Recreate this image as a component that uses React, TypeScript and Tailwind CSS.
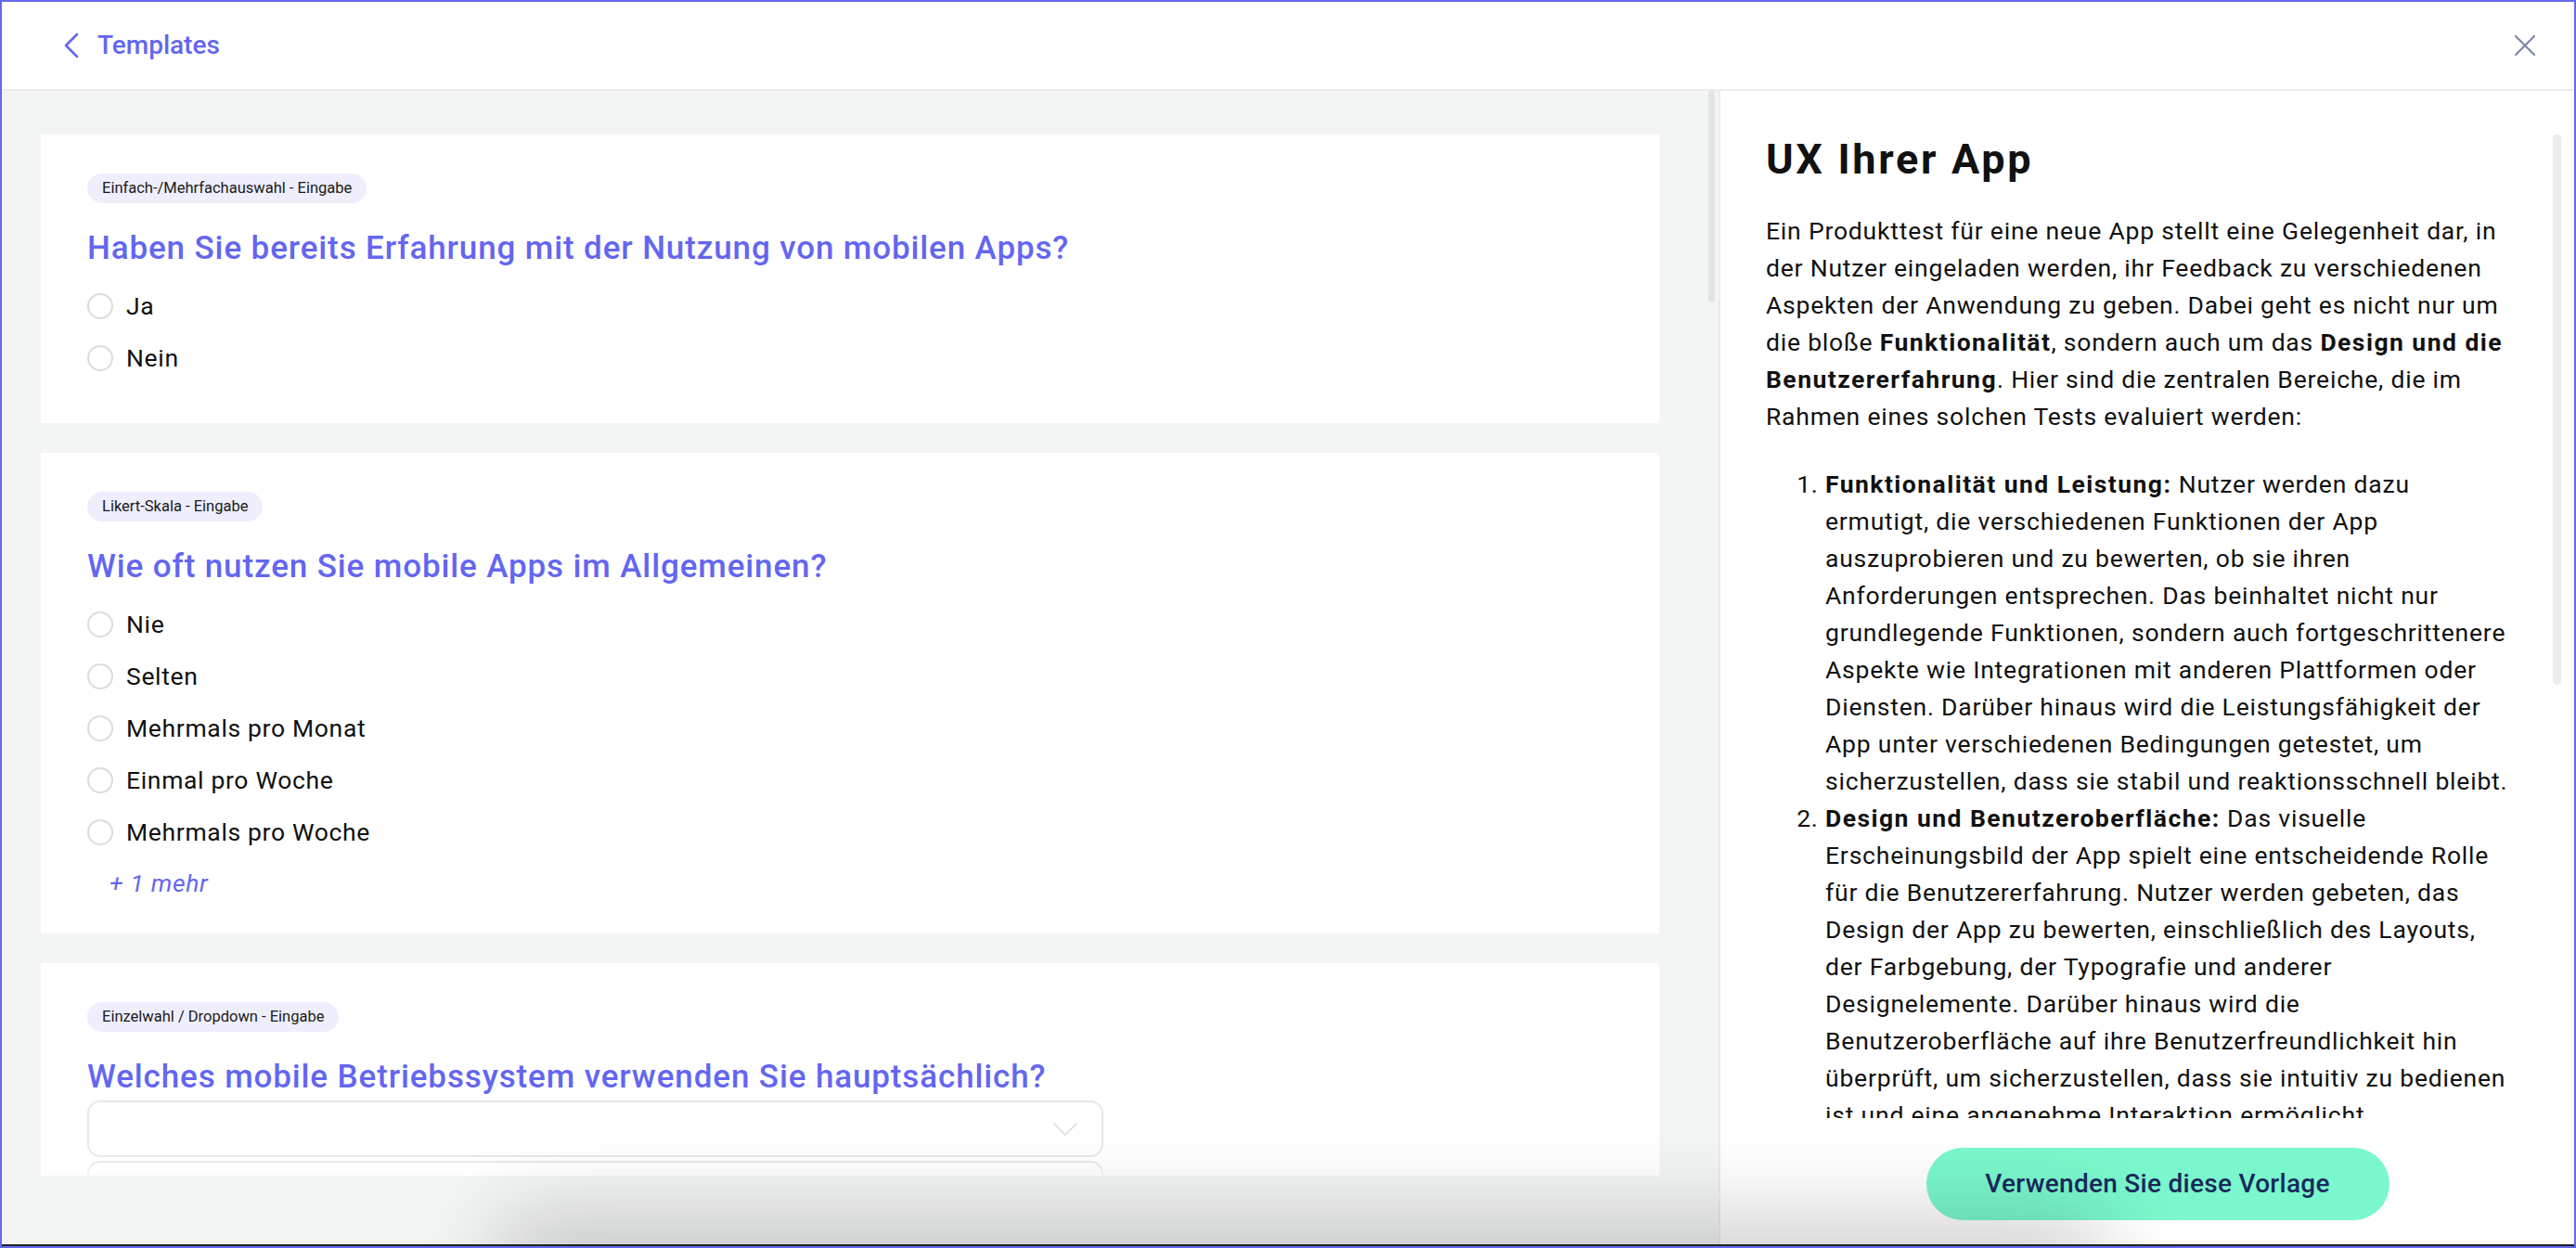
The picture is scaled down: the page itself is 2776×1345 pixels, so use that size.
import { ReactNode } from 'react';

type Question = {
  id: number;
  kind: string;
  title: string;
  type: 'radio' | 'select';
  options?: string[];
  more?: number;
  pad: string;
};

const questions: Question[] = [
  {
    id: 1,
    kind: 'Einfach-/Mehrfachauswahl - Eingabe',
    title: 'Haben Sie bereits Erfahrung mit der Nutzung von mobilen Apps?',
    type: 'radio',
    options: ['Ja', 'Nein'],
    pad: 'pb-[50px]',
  },
  {
    id: 2,
    kind: 'Likert-Skala - Eingabe',
    title: 'Wie oft nutzen Sie mobile Apps im Allgemeinen?',
    type: 'radio',
    options: ['Nie', 'Selten', 'Mehrmals pro Monat', 'Einmal pro Woche', 'Mehrmals pro Woche'],
    more: 1,
    pad: 'pb-[39px]',
  },
  {
    id: 3,
    kind: 'Einzelwahl / Dropdown - Eingabe',
    title: 'Welches mobile Betriebssystem verwenden Sie hauptsächlich?',
    type: 'select',
    pad: 'pb-[50px]',
  },
];

function ChevronDown() {
  return (
    <svg width="26" height="14" viewBox="0 0 26 14" fill="none">
      <polyline points="1,1 13,13 25,1" stroke="#e4e4e4" strokeWidth="2" strokeLinecap="round" strokeLinejoin="round" />
    </svg>
  );
}

function QuestionCard({ q }: { q: Question }) {
  return (
    <div className={`bg-white pl-[50px] pr-[50px] pt-[42px] ${q.pad}`}>
      <span className="inline-flex h-[32px] items-center rounded-full bg-[#efeefc] px-[16px] text-[16.5px] text-[#1a1a1a]">
        {q.kind}
      </span>
      <h3 className="mt-[27px] text-[35px] leading-[44px] font-medium tracking-[0.025em] text-[#6366f1]">{q.title}</h3>

      {q.type === 'radio' && (
        <div className="mt-[20px] flex flex-col gap-[16px]">
          {q.options!.map((opt) => (
            <label key={opt} className="flex h-[40px] items-center gap-[14px]">
              <span className="h-[28px] w-[28px] rounded-full border-2 border-[#dcdcdc]" />
              <span className="text-[26.5px] tracking-[0.025em] text-[#111]">{opt}</span>
            </label>
          ))}
        </div>
      )}

      {q.more && (
        <div className="mt-[20px] pl-[24px] text-[26.5px] leading-[30px] italic tracking-[0.025em] text-[#6366f1]">
          + {q.more} mehr
        </div>
      )}

      {q.type === 'select' && (
        <div className="mt-[3px] flex flex-col gap-[4px]">
          <div className="flex h-[61px] w-[1095px] items-center justify-end rounded-[14px] border-2 border-[#e8e8e8] pr-[26px]">
            <ChevronDown />
          </div>
          <div className="h-[61px] w-[1095px] rounded-[14px] border-2 border-[#e8e8e8]" />
        </div>
      )}
    </div>
  );
}

function B({ children }: { children: ReactNode }) {
  return <strong className="font-bold tracking-[0.055em]">{children}</strong>;
}

export default function App() {
  return (
    <div className="h-[1345px] w-full overflow-hidden border-2 border-[#6468f1] bg-white font-['Roboto',sans-serif]">
      <div className="flex h-full flex-col border-b-2 border-[#222]">
        {/* Header */}
        <header className="flex h-[96px] shrink-0 items-center justify-between border-b-2 border-[#ececec] pl-[65px] pr-[42px]">
          <button className="flex items-center gap-[18px] text-[#6366f1]">
            <svg width="20" height="28" viewBox="0 0 20 28" fill="none">
              <polyline points="16,2 4,14 16,26" stroke="#6366f1" strokeWidth="2.6" strokeLinecap="round" strokeLinejoin="round" />
            </svg>
            <span className="text-[28px] font-medium">Templates</span>
          </button>
          <button aria-label="Schließen">
            <svg width="22" height="22" viewBox="0 0 22 22" fill="none">
              <path d="M1 1 21 21M21 1 1 21" stroke="#7c87a6" strokeWidth="2.2" strokeLinecap="round" />
            </svg>
          </button>
        </header>

        <main className="relative flex min-h-0 flex-1 overflow-hidden">
          {/* Question preview */}
          <section className="relative w-[1850px] shrink-0 bg-[#f3f5f4] pl-[42px] pr-[64px] pt-[47px]">
            <div className="relative h-[1122px] overflow-hidden">
              <div className="flex flex-col gap-[32px]">
                {questions.map((q) => (
                  <QuestionCard key={q.id} q={q} />
                ))}
              </div>
              <div className="pointer-events-none absolute bottom-0 left-0 right-0 h-[15px] bg-linear-to-b from-white/0 to-white/60" />
            </div>
            <div className="absolute left-[1839px] top-0 h-[228px] w-[7px] rounded-full bg-[#e2e4e4]" />
          </section>

          {/* Template description */}
          <aside className="relative flex flex-1 flex-col border-l-2 border-[#ececec]">
            <div className="h-[1107px] shrink-0 overflow-hidden pl-[49px] pt-[47px]">
              <div className="w-[812px] text-[26.5px] leading-[40px] tracking-[0.03em] text-[#111]">
                <h2 className="text-[45px] leading-[53px] font-bold tracking-[0.06em]">UX Ihrer App</h2>
                <p className="mt-[31px]">
                  Ein Produkttest für eine neue App stellt eine Gelegenheit dar, in der Nutzer eingeladen werden, ihr
                  Feedback zu verschiedenen Aspekten der Anwendung zu geben. Dabei geht es nicht nur um die bloße{' '}
                  <B>Funktionalität</B>, sondern auch um das <B>Design und die Benutzererfahrung</B>. Hier sind die
                  zentralen Bereiche, die im Rahmen eines solchen Tests evaluiert werden:
                </p>
                <ol className="mt-[33px] list-decimal pl-[64px]">
                  <li>
                    <B>Funktionalität und Leistung:</B> Nutzer werden dazu ermutigt, die verschiedenen Funktionen der
                    App auszuprobieren und zu bewerten, ob sie ihren Anforderungen entsprechen. Das beinhaltet nicht nur
                    grundlegende Funktionen, sondern auch fortgeschrittenere Aspekte wie Integrationen mit anderen
                    Plattformen oder Diensten. Darüber hinaus wird die Leistungsfähigkeit der App unter verschiedenen
                    Bedingungen getestet, um sicherzustellen, dass sie stabil und reaktionsschnell bleibt.
                  </li>
                  <li>
                    <B>Design und Benutzeroberfläche:</B> Das visuelle Erscheinungsbild der App spielt eine
                    entscheidende Rolle für die Benutzererfahrung. Nutzer werden gebeten, das Design der App zu
                    bewerten, einschließlich des Layouts, der Farbgebung, der Typografie und anderer Designelemente.
                    Darüber hinaus wird die Benutzeroberfläche auf ihre Benutzerfreundlichkeit hin überprüft, um
                    sicherzustellen, dass sie intuitiv zu bedienen ist und eine angenehme Interaktion ermöglicht.
                  </li>
                  <li>
                    <B>Benutzerfreundlichkeit:</B> Nutzer bewerten, wie leicht sich die App erlernen und im Alltag
                    bedienen lässt und ob wichtige Funktionen schnell auffindbar sind.
                  </li>
                </ol>
              </div>
            </div>
            <div className="flex flex-1 items-center justify-center pl-[22px] pt-[6px]">
              <button className="h-[78px] w-[499px] rounded-full bg-[#7af7cc] text-[28px] font-medium tracking-[0.01em] text-[#1b2a5c]">
                Verwenden Sie diese Vorlage
              </button>
            </div>
            <div className="absolute right-[14px] top-[47px] h-[593px] w-[9px] rounded-full bg-[#ececec]" />
          </aside>

          {/* soft shadow along the bottom edge */}
          <div className="pointer-events-none absolute -bottom-[40px] left-[560px] h-[40px] w-[1680px] rounded-full shadow-[0_0_90px_34px_rgba(0,0,0,0.18)]" />
        </main>
      </div>
    </div>
  );
}
